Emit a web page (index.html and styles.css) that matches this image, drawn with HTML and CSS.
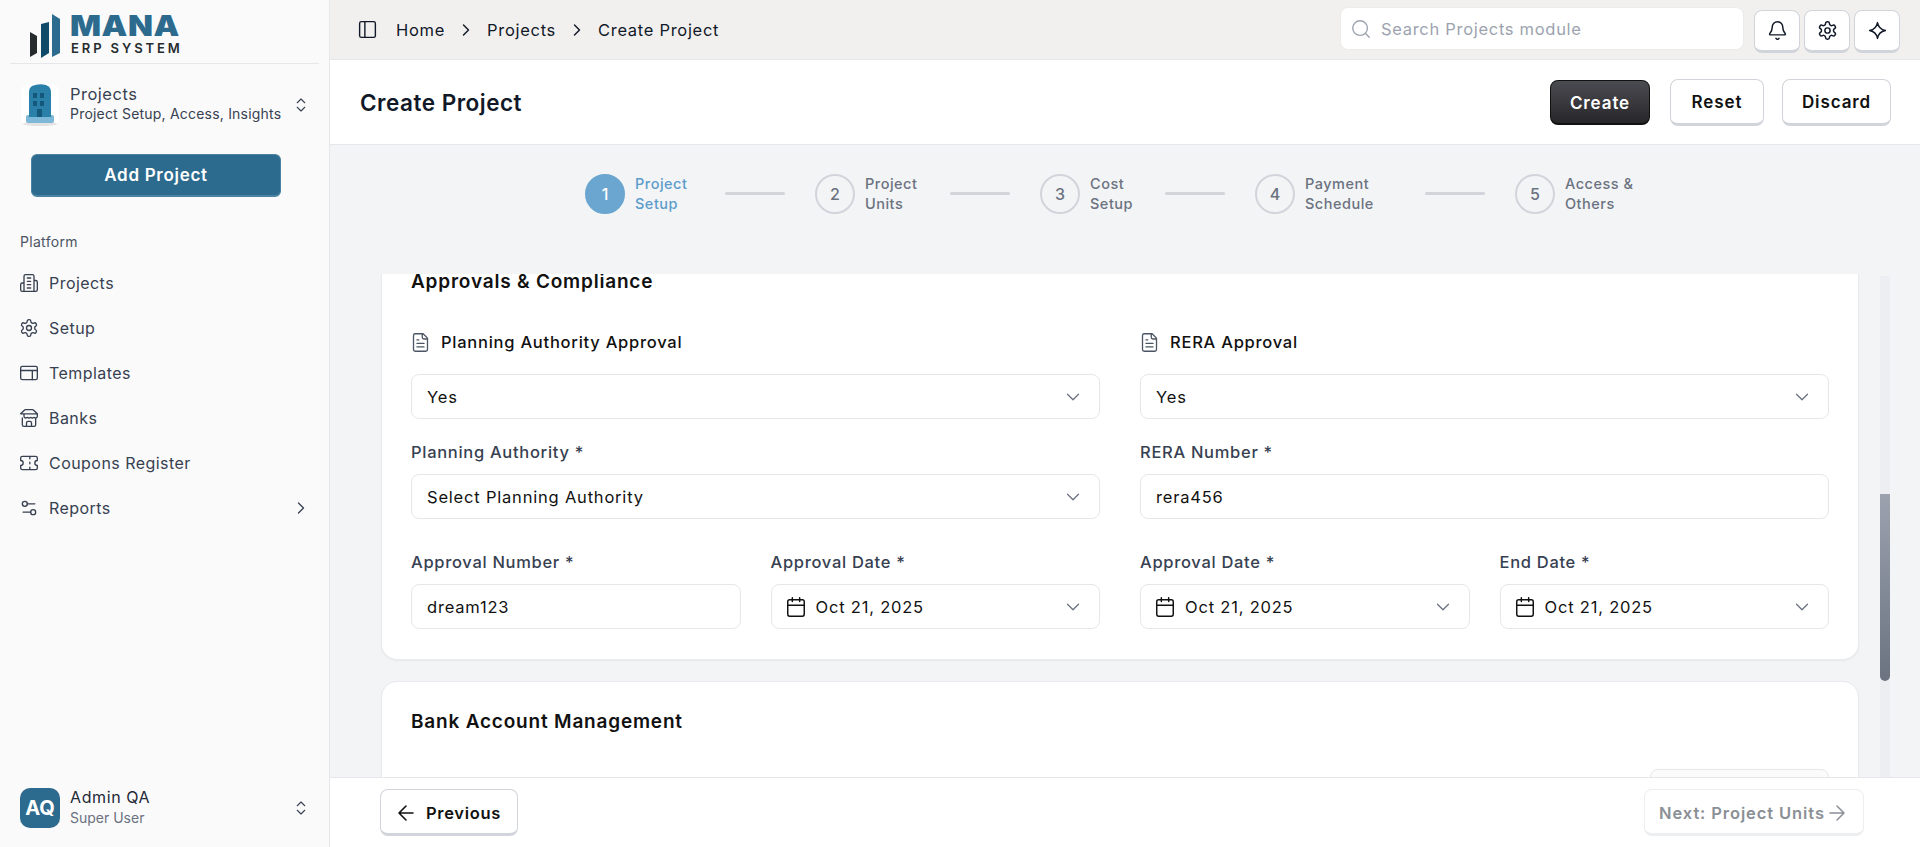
FILE: index.html
```html
<!DOCTYPE html>
<html>
<head>
  <title>Create Project</title>
  <link rel="stylesheet" href="styles.css">
</head>
<body>
  <div class="app">
    <aside class="sidebar">
      <div class="logo">
        <svg class="logo-bars" width="30" height="44" viewBox="0 0 30 44">
          <polygon points="0,18 7,22 7,39 0,43" fill="#262b2e"/>
          <polygon points="11,10 19,8 19,39 11,44" fill="#0f4a68"/>
          <polygon points="22,0 30,5 30,39 22,43" fill="#2d6b8e"/>
        </svg>
        <div class="logo-text">
          <div class="logo-name">MANA</div>
          <div class="logo-sub">ERP SYSTEM</div>
        </div>
      </div>

      <div class="switcher">
        <svg class="switcher-img" width="40" height="44" viewBox="0 0 40 44">
          <rect x="1" y="1" width="38" height="42" rx="8" fill="#fff"/>
          <ellipse cx="20" cy="41" rx="17" ry="2" fill="#e3e3e3"/>
          <path d="M6 34q0-2 2-2h24q2 0 2 2v4q0 2-2 2H8q-2 0-2-2z" fill="#7db8d8"/>
          <path d="M9 9q0-4 3-6 7-3 14-1 5 2 5 7v25H9z" fill="#2a80a8"/>
          <path d="M13 10h4v5h-4zM20 10h4v5h-4zM13 18h4v5h-4zM20 18h4v5h-4zM17 26h5v8h-5z" fill="#14597c"/>
        </svg>
        <div class="switcher-text">
          <div class="switcher-title">Projects</div>
          <div class="switcher-sub">Project Setup, Access, Insights</div>
        </div>
        <svg class="ico updown" viewBox="0 0 24 24"><path d="m7 15 5 5 5-5M7 9l5-5 5 5"/></svg>
      </div>

      <button class="add-btn">Add Project</button>

      <div class="nav-label">Platform</div>
      <nav class="nav">
        <a class="nav-item">
          <svg class="ico" viewBox="0 0 24 24"><path d="M6 22V4a2 2 0 0 1 2-2h8a2 2 0 0 1 2 2v18zM6 12H4a2 2 0 0 0-2 2v6a2 2 0 0 0 2 2h2M18 9h2a2 2 0 0 1 2 2v9a2 2 0 0 1-2 2h-2M10 6h4M10 10h4M10 14h4M10 18h4"/></svg>
          Projects
        </a>
        <a class="nav-item">
          <svg class="ico" viewBox="0 0 24 24"><path d="M12.22 2h-.44a2 2 0 0 0-2 2v.18a2 2 0 0 1-1 1.73l-.43.25a2 2 0 0 1-2 0l-.15-.08a2 2 0 0 0-2.73.73l-.22.38a2 2 0 0 0 .73 2.73l.15.1a2 2 0 0 1 1 1.72v.51a2 2 0 0 1-1 1.74l-.15.09a2 2 0 0 0-.73 2.73l.22.38a2 2 0 0 0 2.73.73l.15-.08a2 2 0 0 1 2 0l.43.25a2 2 0 0 1 1 1.73V20a2 2 0 0 0 2 2h.44a2 2 0 0 0 2-2v-.18a2 2 0 0 1 1-1.73l.43-.25a2 2 0 0 1 2 0l.15.08a2 2 0 0 0 2.73-.73l.22-.39a2 2 0 0 0-.73-2.73l-.15-.08a2 2 0 0 1-1-1.74v-.5a2 2 0 0 1 1-1.74l.15-.09a2 2 0 0 0 .73-2.73l-.22-.38a2 2 0 0 0-2.73-.73l-.15.08a2 2 0 0 1-2 0l-.43-.25a2 2 0 0 1-1-1.73V4a2 2 0 0 0-2-2z"/><circle cx="12" cy="12" r="3"/></svg>
          Setup
        </a>
        <a class="nav-item">
          <svg class="ico" viewBox="0 0 24 24"><rect x="2" y="4" width="20" height="16" rx="2"/><path d="M2 9h20M16 9v11M10 9h6v11"/></svg>
          Templates
        </a>
        <a class="nav-item">
          <svg class="ico" viewBox="0 0 24 24"><path d="m2 7 4.41-4.41A2 2 0 0 1 7.83 2h8.34a2 2 0 0 1 1.42.59L22 7M4 12v8a2 2 0 0 0 2 2h12a2 2 0 0 0 2-2v-8M15 22v-4a2 2 0 0 0-2-2h-2a2 2 0 0 0-2 2v4M2 7h20M22 7v3a2 2 0 0 1-2 2 2.7 2.7 0 0 1-1.59-.63.7.7 0 0 0-.82 0A2.7 2.7 0 0 1 16 12a2.7 2.7 0 0 1-1.59-.63.7.7 0 0 0-.82 0A2.7 2.7 0 0 1 12 12a2.7 2.7 0 0 1-1.59-.63.7.7 0 0 0-.82 0A2.7 2.7 0 0 1 8 12a2 2 0 0 1-2-2V7"/></svg>
          Banks
        </a>
        <a class="nav-item">
          <svg class="ico" viewBox="0 0 24 24"><path d="M2 9a3 3 0 0 1 0 6v3a2 2 0 0 0 2 2h16a2 2 0 0 0 2-2v-3a3 3 0 0 1 0-6V6a2 2 0 0 0-2-2H4a2 2 0 0 0-2 2zM13 5v2M13 17v2M13 11v2"/></svg>
          Coupons Register
        </a>
        <a class="nav-item">
          <svg class="ico" viewBox="0 0 24 24"><path d="M14 17H5M19 7h-9"/><circle cx="17" cy="17" r="3"/><circle cx="7" cy="7" r="3"/></svg>
          Reports
          <svg class="ico nav-arrow" viewBox="0 0 24 24"><path d="m9 18 6-6-6-6"/></svg>
        </a>
      </nav>

      <div class="user">
        <div class="avatar">AQ</div>
        <div class="user-text">
          <div class="user-name">Admin QA</div>
          <div class="user-role">Super User</div>
        </div>
        <svg class="ico updown" viewBox="0 0 24 24"><path d="m7 15 5 5 5-5M7 9l5-5 5 5"/></svg>
      </div>
    </aside>

    <main class="main">
      <header class="topbar">
        <svg class="ico panel-ico" viewBox="0 0 24 24"><rect x="3" y="3" width="18" height="18" rx="2"/><path d="M9 3v18"/></svg>
        <span class="crumb">Home</span>
        <svg class="ico crumb-sep" viewBox="0 0 24 24"><path d="m9 18 6-6-6-6"/></svg>
        <span class="crumb">Projects</span>
        <svg class="ico crumb-sep" viewBox="0 0 24 24"><path d="m9 18 6-6-6-6"/></svg>
        <span class="crumb">Create Project</span>
        <div class="search">
          <svg class="ico" viewBox="0 0 24 24"><circle cx="11" cy="11" r="8"/><path d="m21 21-4.3-4.3"/></svg>
          <span>Search Projects module</span>
        </div>
        <div class="top-actions">
          <button class="icon-btn"><svg class="ico" viewBox="0 0 24 24"><path d="M10.27 21a2 2 0 0 0 3.46 0M3.26 15.33A1 1 0 0 0 4 17h16a1 1 0 0 0 .74-1.67C19.41 13.96 18 12.5 18 8A6 6 0 0 0 6 8c0 4.5-1.41 5.96-2.74 7.33"/></svg></button>
          <button class="icon-btn"><svg class="ico" viewBox="0 0 24 24"><path d="M12.22 2h-.44a2 2 0 0 0-2 2v.18a2 2 0 0 1-1 1.73l-.43.25a2 2 0 0 1-2 0l-.15-.08a2 2 0 0 0-2.73.73l-.22.38a2 2 0 0 0 .73 2.73l.15.1a2 2 0 0 1 1 1.72v.51a2 2 0 0 1-1 1.74l-.15.09a2 2 0 0 0-.73 2.73l.22.38a2 2 0 0 0 2.73.73l.15-.08a2 2 0 0 1 2 0l.43.25a2 2 0 0 1 1 1.73V20a2 2 0 0 0 2 2h.44a2 2 0 0 0 2-2v-.18a2 2 0 0 1 1-1.73l.43-.25a2 2 0 0 1 2 0l.15.08a2 2 0 0 0 2.73-.73l.22-.39a2 2 0 0 0-.73-2.73l-.15-.08a2 2 0 0 1-1-1.74v-.5a2 2 0 0 1 1-1.74l.15-.09a2 2 0 0 0 .73-2.73l-.22-.38a2 2 0 0 0-2.73-.73l-.15.08a2 2 0 0 1-2 0l-.43-.25a2 2 0 0 1-1-1.73V4a2 2 0 0 0-2-2z"/><circle cx="12" cy="12" r="3"/></svg></button>
          <button class="icon-btn"><svg class="ico" viewBox="0 0 24 24"><path d="M12 3c.9 5 3.600 8 9 9-5.400 1-8.100 4-9 9-.9-5-3.600-8-9-9 5.400-1 8.100-4 9-9z"/></svg></button>
        </div>
      </header>

      <section class="page-head">
        <h1 class="page-title">Create Project</h1>
        <div class="page-actions">
          <button class="btn btn-dark">Create</button>
          <button class="btn btn-reset">Reset</button>
          <button class="btn btn-discard">Discard</button>
        </div>
      </section>

      <section class="stepper">
        <div class="step active">
          <div class="step-num">1</div>
          <div class="step-label l1">Project<br>Setup</div>
        </div>
        <div class="step-line"></div>
        <div class="step">
          <div class="step-num">2</div>
          <div class="step-label l2">Project<br>Units</div>
        </div>
        <div class="step-line"></div>
        <div class="step">
          <div class="step-num">3</div>
          <div class="step-label l3">Cost<br>Setup</div>
        </div>
        <div class="step-line"></div>
        <div class="step">
          <div class="step-num">4</div>
          <div class="step-label l4">Payment<br>Schedule</div>
        </div>
        <div class="step-line"></div>
        <div class="step">
          <div class="step-num">5</div>
          <div class="step-label l5">Access &amp;<br>Others</div>
        </div>
      </section>

      <section class="scroll-area">
        <div class="scroll-content">
          <div class="card card-cut">
            <h2 class="card-title">Approvals &amp; Compliance</h2>
            <div class="columns">
              <div class="column">
                <div class="sub-head">
                  <svg class="ico" viewBox="0 0 24 24"><path d="M15 2H6a2 2 0 0 0-2 2v16a2 2 0 0 0 2 2h12a2 2 0 0 0 2-2V7zM14 2v4a2 2 0 0 0 2 2h4M10 9H8M16 13H8M16 17H8"/></svg>
                  Planning Authority Approval
                </div>
                <div class="field-box">Yes<svg class="ico chev" viewBox="0 0 24 24"><path d="m6 9 6 6 6-6"/></svg></div>
                <label class="field-label">Planning Authority *</label>
                <div class="field-box">Select Planning Authority<svg class="ico chev" viewBox="0 0 24 24"><path d="m6 9 6 6 6-6"/></svg></div>
                <div class="pair">
                  <div>
                    <label class="field-label">Approval Number *</label>
                    <div class="field-box">dream123</div>
                  </div>
                  <div>
                    <label class="field-label">Approval Date *</label>
                    <div class="field-box date"><svg class="ico cal" viewBox="0 0 24 24"><path d="M8 2v4M16 2v4"/><rect x="3" y="4" width="18" height="18" rx="2"/><path d="M3 10h18"/></svg>Oct 21, 2025<svg class="ico chev" viewBox="0 0 24 24"><path d="m6 9 6 6 6-6"/></svg></div>
                  </div>
                </div>
              </div>
              <div class="column">
                <div class="sub-head">
                  <svg class="ico" viewBox="0 0 24 24"><path d="M15 2H6a2 2 0 0 0-2 2v16a2 2 0 0 0 2 2h12a2 2 0 0 0 2-2V7zM14 2v4a2 2 0 0 0 2 2h4M10 9H8M16 13H8M16 17H8"/></svg>
                  RERA Approval
                </div>
                <div class="field-box">Yes<svg class="ico chev" viewBox="0 0 24 24"><path d="m6 9 6 6 6-6"/></svg></div>
                <label class="field-label">RERA Number *</label>
                <div class="field-box">rera456</div>
                <div class="pair">
                  <div>
                    <label class="field-label">Approval Date *</label>
                    <div class="field-box date"><svg class="ico cal" viewBox="0 0 24 24"><path d="M8 2v4M16 2v4"/><rect x="3" y="4" width="18" height="18" rx="2"/><path d="M3 10h18"/></svg>Oct 21, 2025<svg class="ico chev" viewBox="0 0 24 24"><path d="m6 9 6 6 6-6"/></svg></div>
                  </div>
                  <div>
                    <label class="field-label">End Date *</label>
                    <div class="field-box date"><svg class="ico cal" viewBox="0 0 24 24"><path d="M8 2v4M16 2v4"/><rect x="3" y="4" width="18" height="18" rx="2"/><path d="M3 10h18"/></svg>Oct 21, 2025<svg class="ico chev" viewBox="0 0 24 24"><path d="m6 9 6 6 6-6"/></svg></div>
                  </div>
                </div>
              </div>
            </div>
          </div>

          <div class="card">
            <h2 class="card-title bank-title">Bank Account Management</h2>
            <div class="bank-actions"><div class="ghost-btn"></div></div>
          </div>
        </div>
        <div class="scroll-track"><div class="scroll-thumb"></div></div>
      </section>

      <footer class="footer">
        <button class="btn btn-prev"><svg class="ico" viewBox="0 0 24 24"><path d="m12 19-7-7 7-7M19 12H5"/></svg>Previous</button>
        <button class="btn btn-next" disabled>Next: Project Units<svg class="ico" viewBox="0 0 24 24"><path d="M5 12h14M12 5l7 7-7 7"/></svg></button>
      </footer>
    </main>
  </div>
</body>
</html>
```

FILE: styles.css
```css
* {
  box-sizing: border-box;
}
html, body {
  margin: 0;
  height: 100%;
  overflow: hidden;
}
body {
  font-family: Inter, "Liberation Sans", sans-serif;
  font-size: 16px;
  color: #111827;
  background-color: #fff;
}
button {
  font-family: inherit;
}
.ico {
  width: 16px;
  height: 16px;
  fill: none;
  stroke: currentColor;
  stroke-width: 2;
  stroke-linecap: round;
  stroke-linejoin: round;
  flex-shrink: 0;
}
.app {
  display: flex;
  height: 847px;
}

/* sidebar */
.sidebar {
  width: 330px;
  flex-shrink: 0;
  display: flex;
  flex-direction: column;
  background-color: #fafafa;
  border-right: 1px solid #e5e7eb;
}
.logo {
  display: flex;
  align-items: flex-start;
  gap: 12px;
  height: 64px;
  margin: 0 10px;
  padding: 14px 0 0 20px;
  border-bottom: 1px solid #e5e7eb;
}
.logo-name {
  margin-left: -2px;
  font-size: 29px;
  line-height: 24px;
  font-weight: 900;
  letter-spacing: 0.5px;
  color: #2d6b8e;
  transform: scaleX(1.12);
  transform-origin: left;
}
.logo-sub {
  margin-left: -1px;
  font-size: 13px;
  line-height: 14px;
  margin-top: 3px;
  font-weight: 600;
  letter-spacing: 2.9px;
  color: #262b2e;
}
.switcher {
  display: flex;
  align-items: center;
  height: 44px;
  margin-top: 19px;
  padding: 0 19px 0 20px;
}
.switcher-text {
  margin: 0 0 3px 10px;
  flex: 1;
}
.switcher-title {
  font-size: 16.5px;
  line-height: 20px;
  letter-spacing: 0.5px;
  color: #374151;
}
.switcher-sub {
  font-size: 14px;
  line-height: 20px;
  letter-spacing: 0.2px;
  color: #374151;
}
.updown {
  width: 18px;
  height: 18px;
  color: #374151;
  stroke-width: 1.5;
}
.add-btn {
  display: block;
  width: 250px;
  height: 43px;
  margin: 27px 0 0 31px;
  font-size: 17px;
  font-weight: 600;
  letter-spacing: 0.7px;
  color: #fff;
  background-color: #2d6b8e;
  border: 1px solid #4a83a3;
  border-bottom-width: 2px;
  border-radius: 6px;
}
.nav-label {
  margin: 35px 0 0 20px;
  font-size: 14px;
  line-height: 20px;
  letter-spacing: 0.3px;
  color: #4b5563;
}
.nav {
  display: flex;
  flex-direction: column;
  margin-top: 8px;
}
.nav-item {
  display: flex;
  align-items: center;
  gap: 10px;
  height: 45px;
  padding: 0 18px 0 19px;
  font-size: 16px;
  letter-spacing: 0.45px;
  color: #374151;
}
.nav-item .ico {
  width: 20px;
  height: 20px;
  stroke-width: 1.6;
}
.nav-item .nav-arrow {
  margin-left: auto;
}
.user {
  display: flex;
  align-items: center;
  margin-top: auto;
  padding: 0 19px 19px 20px;
}
.avatar {
  width: 40px;
  height: 40px;
  display: flex;
  align-items: center;
  justify-content: center;
  border-radius: 10px;
  background-color: #2d6b8e;
  color: #fff;
  font-size: 20px;
  font-weight: 700;
}
.user-text {
  flex: 1;
  margin-left: 10px;
}
.user-name {
  font-size: 16px;
  line-height: 21px;
  letter-spacing: 0.6px;
  color: #1f2937;
}
.user-role {
  font-size: 14px;
  line-height: 20px;
  color: #6b7280;
}

/* main column */
.main {
  flex: 1;
  min-width: 0;
  display: flex;
  flex-direction: column;
}
.topbar {
  display: flex;
  align-items: center;
  height: 60px;
  flex-shrink: 0;
  padding: 0 20px 0 30px;
  background-color: #f1f0ef;
  border-bottom: 1px solid #e5e7eb;
}
.panel-ico {
  width: 21px;
  height: 21px;
  margin: 0 18px 0 -3px;
  stroke-width: 1.6;
  color: #111827;
}
.crumb {
  font-size: 16.5px;
  letter-spacing: 0.7px;
  color: #111827;
}
.crumb-sep {
  margin: 0 11px;
  width: 20px;
  height: 20px;
  stroke-width: 1.7;
}
.search {
  display: flex;
  align-items: center;
  gap: 9px;
  width: 404px;
  height: 43px;
  margin: -2px 0 0 auto;
  padding: 0 9px;
  background-color: #fff;
  border: 1px solid #ececec;
  border-radius: 8px;
  color: #9ca3af;
  font-size: 16.5px;
  letter-spacing: 0.7px;
}
.search .ico {
  width: 22px;
  height: 22px;
  stroke-width: 1.5;
  color: #9ca3af;
}
.top-actions {
  display: flex;
  gap: 4px;
  margin: 3px 0 0 10px;
}
.icon-btn {
  width: 46px;
  height: 43px;
  display: flex;
  align-items: center;
  justify-content: center;
  padding: 0;
  background-color: #fff;
  border: 1px solid #d1d5db;
  border-bottom: 3px solid #d1d5db;
  border-radius: 8px;
  color: #111827;
}
.icon-btn .ico {
  width: 21px;
  height: 21px;
  stroke-width: 1.7;
}
.page-head {
  display: flex;
  align-items: center;
  justify-content: space-between;
  height: 85px;
  flex-shrink: 0;
  padding: 0 29px 0 30px;
  background-color: #fff;
  border-bottom: 1px solid #e5e7eb;
}
.page-title {
  margin: 0;
  font-size: 22.5px;
  font-weight: 600;
  letter-spacing: 0.5px;
  color: #111827;
}
.page-actions {
  display: flex;
  align-items: center;
}
.btn {
  display: inline-flex;
  align-items: center;
  justify-content: center;
  height: 47px;
  padding: 2px 0 0;
  font-size: 17px;
  font-weight: 600;
  letter-spacing: 0.9px;
  color: #111;
  background-color: #fff;
  border: 1px solid #d1d5db;
  border-bottom: 3px solid #d1d5db;
  border-radius: 8px;
}
.btn-dark {
  width: 100px;
  height: 45px;
  color: #fff;
  background: linear-gradient(#4b4b52, #27272a);
  border: 1px solid #111;
  border-bottom-width: 2px;
}
.btn-reset {
  width: 94px;
  margin-left: 20px;
}
.btn-discard {
  width: 109px;
  margin-left: 18px;
}

/* stepper */
.stepper {
  display: flex;
  justify-content: center;
  align-items: center;
  height: 129px;
  flex-shrink: 0;
  padding-bottom: 32px;
  background-color: #f3f4f6;
}
.step {
  display: flex;
  align-items: center;
  gap: 10px;
  color: #6b7280;
}
.step-num {
  width: 40px;
  height: 40px;
  display: flex;
  align-items: center;
  justify-content: center;
  border: 2px solid #d1d5db;
  border-radius: 50%;
  font-size: 16px;
  font-weight: 500;
}
.step-label {
  font-size: 14.5px;
  line-height: 20px;
  font-weight: 500;
  letter-spacing: 0.5px;
}
.step.active .step-num {
  color: #fff;
  background-color: #6aa6cf;
  border-color: #6aa6cf;
}
.step.active .step-label {
  color: #5c9ccb;
}
.l1 { width: 60px; }
.l2 { width: 55px; }
.l3 { width: 45px; }
.l4 { width: 90px; }
.l5 { width: 100px; }
.step-line {
  width: 60px;
  height: 3px;
  margin: 0 30px;
  background-color: #d1d5db;
  border-radius: 2px;
}

/* scrolling part, cut off as in the scrolled state */
.scroll-area {
  flex: 1;
  min-height: 0;
  display: flex;
  overflow: hidden;
  background-color: #f3f4f6;
}
.scroll-content {
  flex: 1;
  min-width: 0;
  padding-left: 51px;
  padding-right: 21px;
}
.card {
  background-color: #fff;
  border: 1px solid #e9eaed;
  border-radius: 16px;
  padding: 0 29px;
  box-shadow: 0 1px 2px rgba(0,0,0,0.05);
}
.card-cut {
  height: 386px;
  border-top: none;
  border-top-left-radius: 0;
  border-top-right-radius: 0;
  margin-bottom: 21px;
}
.card-title {
  margin: 0;
  font-size: 19px;
  line-height: 16px;
  font-weight: 600;
  letter-spacing: 0.8px;
  color: #111;
}
.columns {
  display: grid;
  grid-template-columns: 1fr 1fr;
  column-gap: 40px;
  margin-top: 40px;
}
.sub-head {
  display: flex;
  align-items: center;
  gap: 10px;
  height: 24px;
  font-size: 16.5px;
  font-weight: 500;
  letter-spacing: 0.75px;
  color: #111;
}
.sub-head .ico {
  width: 21px;
  height: 21px;
  margin-left: -1px;
  stroke-width: 1.5;
  color: #4b5563;
}
.sub-head + .field-box {
  margin-top: 20px;
}
.field-label {
  display: block;
  margin: 23px 0 12px;
  font-size: 16.5px;
  line-height: 20px;
  font-weight: 500;
  letter-spacing: 0.7px;
  color: #374151;
}
.field-box {
  display: flex;
  align-items: center;
  height: 45px;
  padding: 0 15px;
  font-size: 16.5px;
  letter-spacing: 0.8px;
  color: #111;
  background-color: #fff;
  border: 1px solid #e5e7eb;
  border-radius: 8px;
}
.chev {
  width: 22px;
  height: 22px;
  margin-left: auto;
  color: #6b7280;
  stroke-width: 1.4;
}
.cal {
  width: 22px;
  height: 22px;
  margin: 0 9px 0 -2px;
  stroke-width: 1.6;
}
.pair {
  display: grid;
  grid-template-columns: 1fr 1fr;
  column-gap: 30px;
  margin-top: 33px;
}
.pair .field-label {
  margin-top: 0;
}
.bank-title {
  margin-top: 30px;
  line-height: 20px;
}
.bank-actions {
  display: flex;
  justify-content: flex-end;
  margin-top: 37px;
}
.ghost-btn {
  width: 179px;
  height: 45px;
  background-color: #fbfbfc;
  border: 1px solid #e5e7eb;
  border-radius: 8px;
}
.scroll-track {
  width: 10px;
  margin-right: 30px;
  margin-top: 2px;
  padding-top: 218px;
  background-color: #eceef1;
}
.scroll-thumb {
  height: 187px;
  background: linear-gradient(#9ca3af, #6b7280);
  border-radius: 0 0 5px 5px;
}

/* footer */
.footer {
  display: flex;
  align-items: center;
  justify-content: space-between;
  height: 70px;
  flex-shrink: 0;
  padding: 0 56px 0 50px;
  background-color: #fff;
  border-top: 1px solid #e5e7eb;
}
.btn-prev {
  width: 138px;
  gap: 8px;
  padding-right: 3px;
  font-size: 16.5px;
  letter-spacing: 0.7px;
}
.btn-prev .ico {
  width: 24px;
  height: 24px;
  stroke-width: 1.6;
}
.btn-next {
  width: 220px;
  gap: 0;
  font-size: 16.5px;
  letter-spacing: 0.9px;
  color: #8b8f96;
  border-color: #eceef0;
}
.btn-next .ico {
  width: 24px;
  height: 24px;
  stroke-width: 1.5;
}
```
